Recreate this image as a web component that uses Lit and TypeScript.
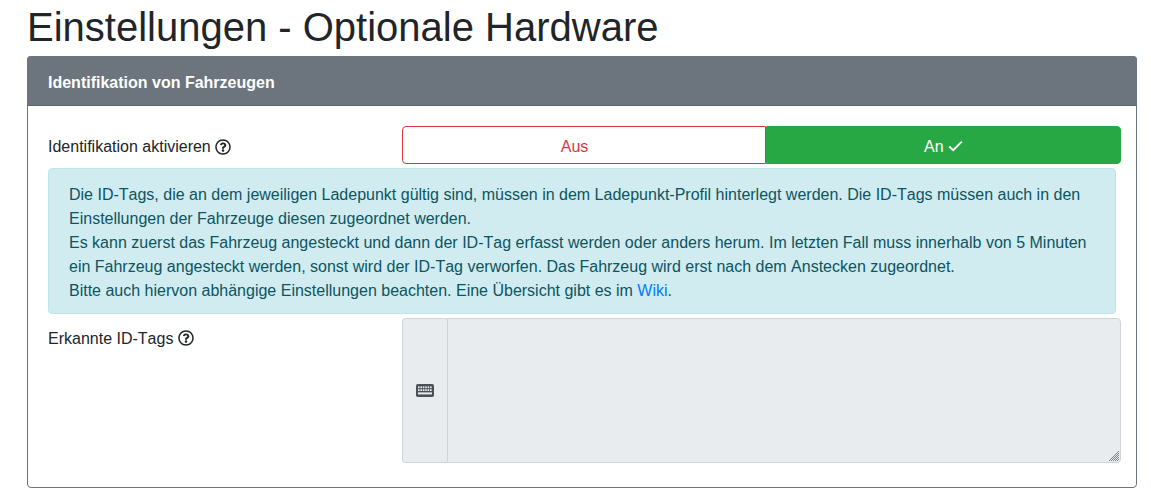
import { LitElement, html, css, svg } from "lit";
import { customElement } from "lit/decorators.js";

const helpIcon = html`<svg class="help" viewBox="0 0 512 512" aria-hidden="true"><path fill="currentColor" d="M256 8C119.043 8 8 119.083 8 256c0 136.997 111.043 248 248 248s248-111.003 248-248C504 119.083 392.957 8 256 8zm0 448c-110.532 0-200-89.431-200-200 0-110.495 89.472-200 200-200 110.491 0 200 89.471 200 200 0 110.53-89.431 200-200 200zm107.244-255.2c0 67.052-72.421 68.084-72.421 92.863V300c0 6.627-5.373 12-12 12h-45.647c-6.627 0-12-5.373-12-12v-8.659c0-35.745 27.1-50.034 47.579-61.516 17.561-9.845 28.324-16.541 28.324-29.579 0-17.246-21.999-28.693-39.784-28.693-23.189 0-33.894 10.977-48.942 29.969-4.057 5.12-11.46 6.071-16.666 2.124l-27.824-21.098c-5.107-3.872-6.251-11.066-2.644-16.363C184.846 131.491 214.94 112 261.794 112c49.071 0 101.45 38.304 101.45 88.8zM298 368c0 23.159-18.841 42-42 42s-42-18.841-42-42 18.841-42 42-42 42 18.841 42 42z"/></svg>`;

const checkIcon = html`<svg class="check" viewBox="0 0 15 12" aria-hidden="true"><path d="M1.2 6.4 L5.2 10.2 L13.8 1.6" fill="none" stroke="currentColor" stroke-width="2"/></svg>`;

const keyCols = [0, 1, 2, 3, 4, 5].map((i) => 2 + i * 2.4);

@customElement("app-root")
export class AppRoot extends LitElement {
  static styles = css`
    :host {
      display: block;
      font-family: "Liberation Sans", Arial, sans-serif;
      font-size: 16px;
      line-height: 24px;
      color: #212529;
      background: #fff;
      font-kerning: none;
    }
    * { box-sizing: border-box; }
    .page { padding: 0 14px 0 27px; height: 495px; overflow: hidden; }
    h1 {
      margin: 0 0 5px;
      padding-top: 3px;
      font-size: 40px;
      line-height: 48px;
      font-weight: 400;
    }
    .card {
      border: 1px solid #6c757d;
      border-radius: 4px;
      width: 1110px;
    }
    .card-header {
      margin: -1px -1px 0;
      height: 50px;
      padding: 15px 21px 10px;
      background: #6c757d;
      color: #fff;
      font-weight: 700;
      border-bottom: 1px solid rgba(0, 0, 0, 0.125);
      border-radius: 4px 4px 0 0;
    }
    .card-body { padding: 20px 20px 24px; }
    .row {
      display: grid;
      grid-template-columns: 354.33px 1fr;
      margin-right: -5px;
    }
    .label { display: flex; align-items: flex-start; gap: 4.45px; }
    .label-center { align-items: center; padding-top: 4px; }
    .label-top { padding-top: 9px; }
    .help { width: 16px; height: 16px; flex: none; }
    .label-top .help { margin-top: 3px; }
    .label-center .help { margin-top: -1px; }
    .btn-group { display: flex; height: 38px; }
    .btn {
      flex: 1 1 auto;
      display: flex;
      align-items: center;
      justify-content: center;
      gap: 4px;
      padding: 8px 12px 4px;
      font-size: 16px;
      border: 1px solid;
    }
    .off {
      background: #fff;
      color: #dc3545;
      border-color: #dc3545;
      border-radius: 4px 0 0 4px;
    }
    .off .check { visibility: hidden; }
    .on {
      background: #28a745;
      color: #fff;
      border-color: #28a745;
      border-radius: 0 4px 4px 0;
    }
    .check { width: 15px; height: 12px; margin-top: -2px; }
    .alert {
      margin: 4px 0;
      padding: 14px 20px 10px;
      height: 146px;
      background: #d1ecf1;
      border: 1px solid #bee5eb;
      border-radius: 4px;
      color: #0c5460;
    }
    .alert a { color: #007bff; text-decoration: none; }
    .input-group { display: flex; height: 145px; position: relative; }
    .input-group::after {
      content: "";
      position: absolute;
      right: 2px;
      bottom: 2px;
      width: 11px;
      height: 11px;
      clip-path: polygon(100% 0, 100% 100%, 0 100%);
      background: conic-gradient(#7d8285 25%, transparent 0 50%, #7d8285 0 75%, transparent 0) 0 0 / 2px 2px;
      pointer-events: none;
    }
    .prepend {
      width: 45px;
      flex: none;
      display: flex;
      align-items: center;
      justify-content: center;
      background: #e9ecef;
      border: 1px solid #ced4da;
      border-right: 0;
      border-radius: 4px 0 0 4px;
      color: #495057;
    }
    .kbd { width: 18px; height: 13px; }
    .kbd .key { fill: #e9ecef; }
    textarea {
      flex: 1;
      display: block;
      min-width: 0;
      padding: 6px 12px;
      font: inherit;
      color: #495057;
      background: #e9ecef;
      border: 1px solid #ced4da;
      border-radius: 0 4px 4px 0;
      outline: none;
      resize: none;
    }
  `;

  render() {
    return html`
      <div class="page">
        <h1>Einstellungen - Optionale Hardware</h1>
        <section class="card">
          <header class="card-header">Identifikation von Fahrzeugen</header>
          <div class="card-body">
            <div class="row">
              <div class="label label-center">Identifikation aktivieren ${helpIcon}</div>
              <div class="btn-group">
                <div class="btn off">Aus ${checkIcon}</div>
                <div class="btn on">An ${checkIcon}</div>
              </div>
            </div>
            <div class="alert">
              Die ID-Tags, die an dem jeweiligen Ladepunkt gültig sind, müssen in dem Ladepunkt-Profil hinterlegt werden. Die ID-Tags müssen auch in den Einstellungen der Fahrzeuge diesen zugeordnet werden.<br />
              Es kann zuerst das Fahrzeug angesteckt und dann der ID-Tag erfasst werden oder anders herum. Im letzten Fall muss innerhalb von 5 Minuten ein Fahrzeug angesteckt werden, sonst wird der ID-Tag verworfen. Das Fahrzeug wird erst nach dem Anstecken zugeordnet.<br />
              Bitte auch hiervon abhängige Einstellungen beachten. Eine Übersicht gibt es im <a href="#">Wiki</a>.
            </div>
            <div class="row">
              <div class="label label-top">Erkannte ID-Tags ${helpIcon}</div>
              <div class="input-group">
                <div class="prepend">
                  <svg class="kbd" viewBox="0 0 18 13" aria-hidden="true">
                    <rect width="18" height="13" rx="1.8" fill="currentColor"/>
                    ${keyCols.map((x) => svg`
                      <rect class="key" x="${x}" y="2.4" width="1.6" height="1.8"/>
                      <rect class="key" x="${x}" y="5.2" width="1.6" height="1.8"/>
                    `)}
                    <rect class="key" x="2" y="8.4" width="14" height="2"/>
                  </svg>
                </div>
                <textarea readonly></textarea>
              </div>
            </div>
          </div>
        </section>
      </div>
    `;
  }
}
